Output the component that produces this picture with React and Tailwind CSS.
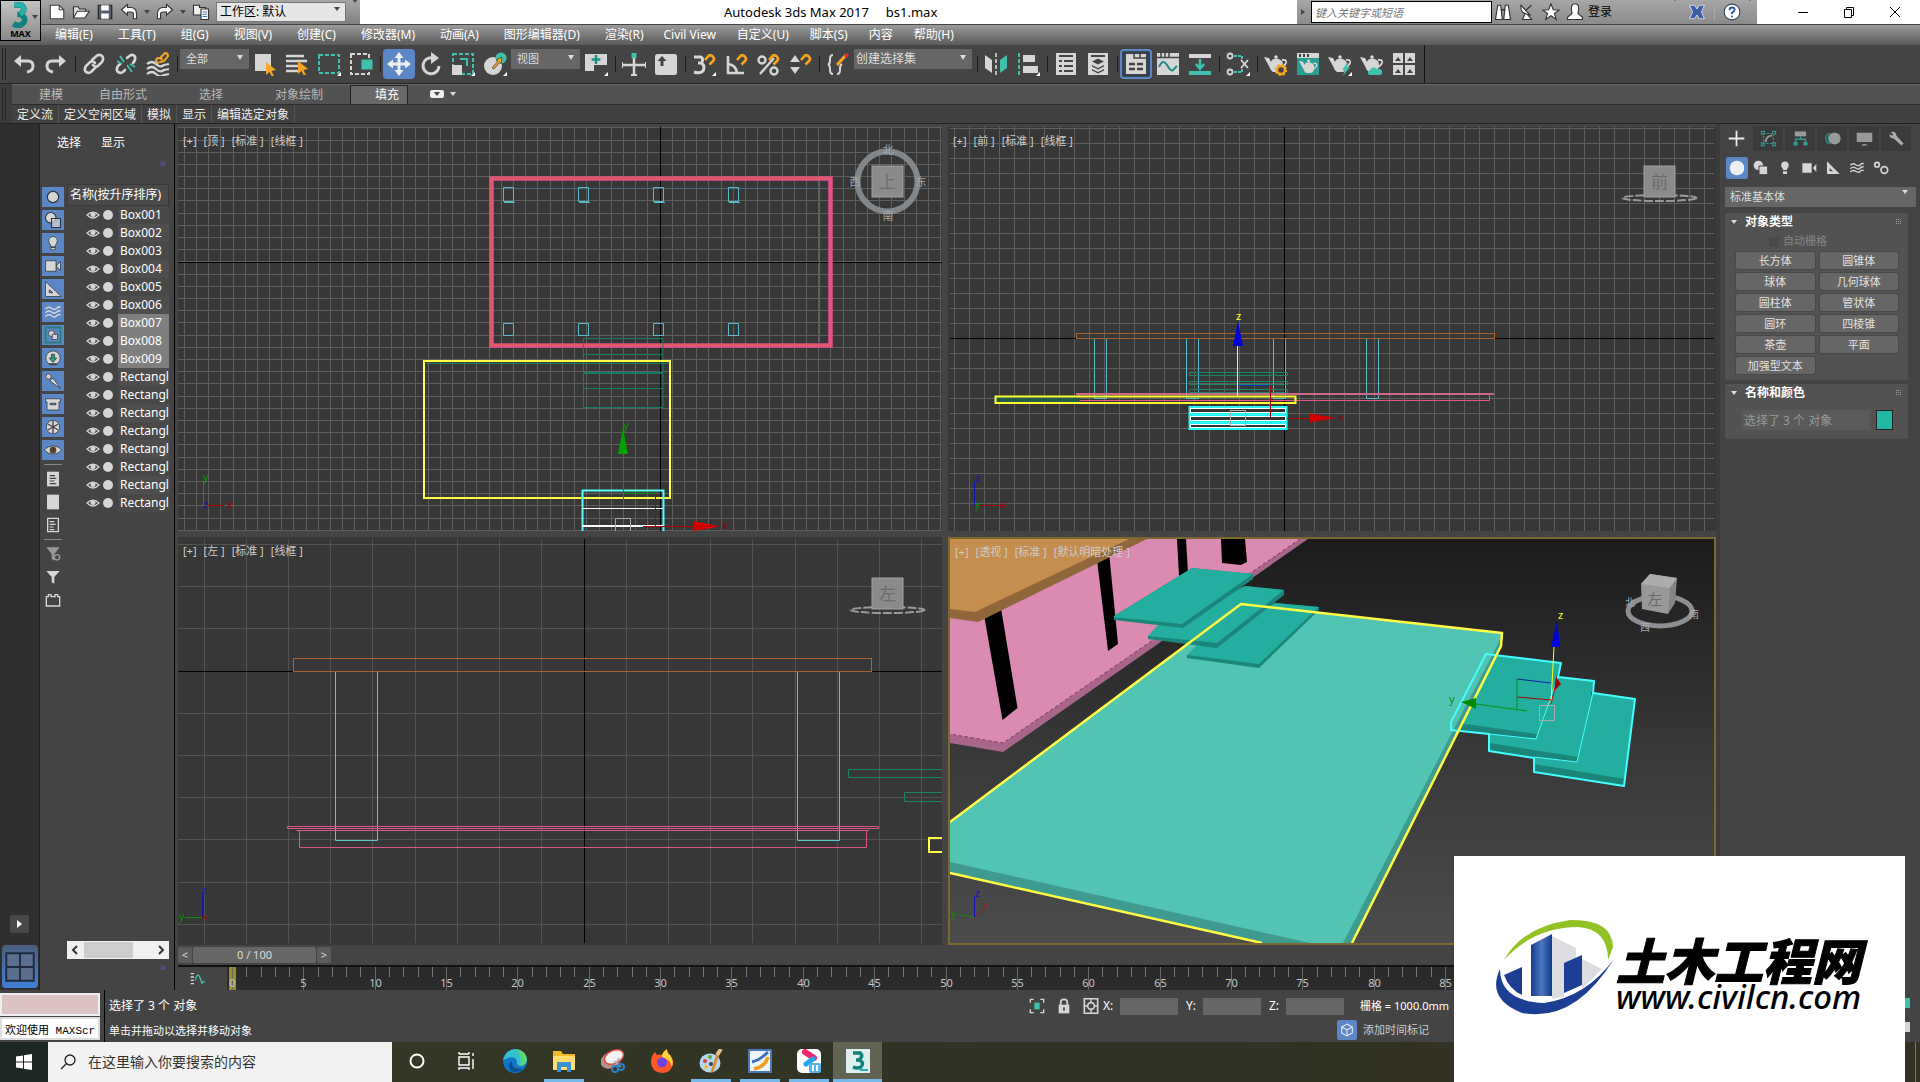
import React from 'react';

const MENUS = [
  '编辑(E)', '工具(T)', '组(G)', '视图(V)', '创建(C)', '修改器(M)', '动画(A)', '图形编辑器(D)', '渲染(R)',
];

const MORE_MENUS = ['Civil View', '自定义(U)', '脚本(S)', '内容', '帮助(H)'];

const NODES = [
  'Box001', 'Box002', 'Box003', 'Box004', 'Box005', 'Box006', 'Box007', 'Box008', 'Box009',
  'Rectangle001', 'Rectangle002', 'Rectangle003', 'Rectangle004', 'Rectangle005', 'Rectangle006',
  'Rectangle007', 'Rectangle008',
];

const SELECTED = ['Box007', 'Box008', 'Box009'];

const PRIMITIVES = [
  '长方体', '圆锥体', '球体', '几何球体', '圆柱体', '管状体', '圆环', '四棱锥', '茶壶', '平面', '加强型文本',
];

const L = '#d6d6d6';
const T = '#3fc1b0';
const Y = '#f5a623';

function Svg({ size = 'h-6 w-6', box = '0 0 24 24', children }) {
  return (
    <svg className={`block shrink-0 ${size}`} viewBox={box} fill="none" aria-hidden="true">
      {children}
    </svg>
  );
}

/* ---------- Shared glyphs ---------- */

function Magnet() {
  return <path d="M13 8 L17 3.500 A4 4 0 0 1 22 8 L17.500 12.500" stroke={Y} strokeWidth="2.600" />;
}

function Teapot({ fill = L }) {
  return (
    <g fill={fill}>
      <path d="M0 5 L5 6 L7 10 Q7 7 12 6.500 Q19 7 19 13 Q19 18 15 20 H9 Q6 18 5.500 15 Z" />
      <circle cx="12" cy="5" r="1.800" />
      <path d="M18 8 Q23 7 22 11 Q21 14 17 15" stroke={fill} strokeWidth="1.800" fill="none" />
    </g>
  );
}

function Waves() {
  return (
    <g stroke={L} strokeWidth="2">
      <path d="M2 8 Q6 4 10 7 T17 7 T22 6" />
      <path d="M2 13 Q6 9 10 12 T17 12 T22 11" />
      <path d="M2 18 Q6 14 10 17 T17 17 T22 16" />
    </g>
  );
}

function Flyout() {
  return <path d="M24 20 V24 H20 Z" fill="#fff" />;
}

/* ---------- Main toolbar ---------- */

function Tool({ label, active, outlined, flyout, children }) {
  const state = active ? 'bg-[#5b87c7]' : outlined ? 'border-2 border-[#5b87c7] bg-[#39424f]' : '';
  return (
    <button type="button" aria-label={label} className={`flex h-[30px] w-8 shrink-0 items-center justify-center rounded-sm ${state}`}>
      <Svg>
        {children}
        {flyout && <Flyout />}
      </Svg>
    </button>
  );
}

function Sep() {
  return <span className="flex w-1.5 shrink-0 justify-center"><span className="h-4 w-px bg-[#1c1c1c]" /></span>;
}

function Combo({ label, width, text = 'pl-1.5 text-[11px]', children }) {
  return (
    <span className={`relative mb-2.5 flex h-5 shrink-0 ${width}`}>
      <select aria-label={label} className={`h-5 w-full appearance-none bg-[#666] leading-5 text-[#ddd] ${text}`}>
        <option>{children}</option>
      </select>
      <span className="pointer-events-none absolute top-1.5 right-1.5 border-x-[3px] border-t-[5px] border-x-transparent border-t-[#ddd]" />
    </span>
  );
}

function Toolbar() {
  return (
    <div className="flex h-[39px] shrink-0 border-b border-[#222] bg-[#444]">
      <div className="flex items-center border-r border-[#111]">
        <span className="mr-0.5 ml-0.5 h-8 w-1 border-x border-[#222]" />
        <Tool label="撤消"><path d="M2 9 L9 3 V15 Z" fill={L} /><path d="M8 9 H16 Q21 9 21 14 Q21 19 15 20" stroke={L} strokeWidth="3" /></Tool>
        <Tool label="重做"><path d="M22 9 L15 3 V15 Z" fill={L} /><path d="M16 9 H8 Q3 9 3 14 Q3 19 9 20" stroke={L} strokeWidth="3" /></Tool>
        <Sep />
        <Tool label="链接">
          <g stroke={L} strokeWidth="2.600" strokeLinecap="round">
            <path d="M10 8 L15 3.500 Q18 2 20.500 4.500 Q22 7 20 10 L16 14 Q13 15.500 11 13" />
            <path d="M14 15 L9 20 Q6 22 3.500 19.500 Q2 17 4 14 L8 10 Q11 8.500 13 11" />
          </g>
        </Tool>
        <Tool label="取消链接">
          <g stroke={L} strokeWidth="2.600" strokeLinecap="round">
            <path d="M13 6 L16 3.500 Q19 2 21 4.500 Q22 8 19 11" />
            <path d="M11 18 L9 20 Q6 22 3.500 19.500 Q2 17 4 14 L6 12" />
          </g>
          <path d="M6 4 L10 10 M3 9 L8 12 M13 13 L18 20 M16 12 L21 15" stroke={T} strokeWidth="1.800" />
        </Tool>
        <Tool label="绑定到空间扭曲">
          <g stroke={L} strokeWidth="2.200">
            <path d="M1 12 Q6 8 10 12 T18 13 L23 12" />
            <path d="M1 17 Q6 13 10 17 T18 18 L23 17" />
            <path d="M1 22 Q6 18 10 22 T18 23 L23 22" />
          </g>
          <path d="M12 11 L10 9 Q10 6 13 6 L16 7 M15 5 L19 1 Q22 1 22 4 L18 9 L14 10" stroke={Y} strokeWidth="2" strokeLinecap="round" />
        </Tool>
        <Sep />
        <Combo label="选择过滤器" width="w-[69px]">全部</Combo>
        <Tool label="选择对象"><path d="M2 2 H18 V19 H2 Z" fill={L} /><path d="M13 10 L23 18 L18.500 19 L21 24 L18.500 24 L16.500 20 L13 23 Z" fill={Y} /></Tool>
        <Tool label="按名称选择"><path d="M1 4 H19 M1 9 H22 M1 14 H13 M1 19 H14" stroke={L} strokeWidth="2.600" /><path d="M13 9 L23 17 L18.500 18 L21 23 L18.500 23 L16.500 19 L13 22 Z" fill={Y} /></Tool>
        <Tool label="矩形选择区域" flyout><path d="M2 3 H22 V21 H2 Z" stroke={T} strokeWidth="2" strokeDasharray="4 2" /></Tool>
        <Tool label="窗口/交叉"><path d="M2 2 H20 V22 H2 Z" stroke={L} strokeWidth="2" strokeDasharray="4 2" /><path d="M12 7 H24 V18 H12 Z" fill={T} stroke="#444" /></Tool>
        <Sep />
        <Tool label="选择并移动" active>
          <path d="M12 0 L16.500 6 H13.500 V10.500 H18 V7.500 L24 12 L18 16.500 V13.500 H13.500 V18 H16.500 L12 24 L7.500 18 H10.500 V13.500 H6 V16.500 L0 12 L6 7.500 V10.500 H10.500 V6 H7.500 Z" fill="#eee" />
        </Tool>
        <Tool label="选择并旋转"><path d="M14 6 A8 8 0 1 0 20 14" stroke={L} strokeWidth="3" /><path d="M12 0 L20 6 L12 12 Z" fill={L} /></Tool>
        <Tool label="选择并缩放" flyout>
          <path d="M2 2 H22 V22 H2 Z" stroke={T} strokeWidth="2" strokeDasharray="4 2" />
          <path d="M1 13 H11 V23 H1 Z" fill={L} />
          <path d="M9 7 H16 V14" stroke={T} strokeWidth="2" />
        </Tool>
        <Tool label="选择并放置" flyout>
          <circle cx="10" cy="14" r="9" fill={L} />
          <circle cx="18" cy="6" r="5.500" fill={T} />
          <path d="M9 16 L15 9 L13 8 L19 5 L18 12 L16.500 10.500 L11 17 Z" fill={Y} stroke="#444" strokeWidth=".8" />
        </Tool>
        <Combo label="参考坐标系" width="w-[69px]">视图</Combo>
        <Tool label="使用轴点中心" flyout><path d="M1 2 H10 V19 H1 Z M10 2 H23 V13 H10 Z" fill={L} /><path d="M12 3 V12 M7.500 7.500 H16.500" stroke="#1f8f86" strokeWidth="2.500" /></Tool>
        <Sep />
        <Tool label="选择并操纵"><path d="M12 5 V23 M1 13 H23" stroke={L} strokeWidth="2.500" /><path d="M9.500 1 H14.500 V6 H9.500 Z" fill={T} /><path d="M0 10 V16 M24 10 V16 M9 23 H15" stroke={L} strokeWidth="2" /></Tool>
        <Tool label="键盘快捷键覆盖"><rect x="1" y="2" width="22" height="21" rx="2.500" fill={L} /><path d="M8 4 L12.500 9 H9.500 V14 H6.500 V9 H3.500 Z" fill="#444" /></Tool>
        <Sep />
        <Tool label="捕捉开关" flyout><path d="M2 5 H9 Q12 7 9.500 11 H6 H9.500 Q13.500 14 11 19 Q8 22 2 20" stroke={L} strokeWidth="3" /><Magnet /></Tool>
        <Tool label="角度捕捉"><path d="M4 4 V21 H20 M4 12 Q12 13 13 21" stroke={L} strokeWidth="2.600" /><Magnet /></Tool>
        <Tool label="百分比捕捉"><circle cx="6" cy="8" r="3.500" stroke={L} strokeWidth="2.400" /><circle cx="18" cy="19" r="3.500" stroke={L} strokeWidth="2.400" /><path d="M4 22 L18 6" stroke={L} strokeWidth="2.400" /><Magnet /></Tool>
        <Tool label="微调器捕捉"><path d="M2 10 L7 3 L12 10 Z M2 15 H12 L7 22 Z" fill={L} /><Magnet /></Tool>
        <Sep />
        <Tool label="编辑命名选择集"><path d="M7 3 Q4 3 4 7 V9 Q4 12 2 12 Q4 13 4 16 V18 Q4 22 7 22 M11 22 Q14 22 14 18 V16 Q14 13 16 12" stroke={L} strokeWidth="2" /><path d="M11 13 L20 3" stroke={Y} strokeWidth="3" /><path d="M19 5 L22 2" stroke="#d33" strokeWidth="3" /></Tool>
        <Combo label="命名选择集" width="w-[118px]" text="pl-0.5 text-xs">创建选择集</Combo>
        <span className="w-0.5" />
        <Sep />
        <Tool label="镜像"><path d="M1 3 L8 8 V21 L1 16 Z" fill={L} /><path d="M23 3 L16 8 V21 L23 16 Z" fill={T} /><path d="M12 1 V23" stroke={L} strokeWidth="1.600" strokeDasharray="4 2" /></Tool>
        <Tool label="对齐" flyout><path d="M3 1 V23" stroke={T} strokeWidth="2" strokeDasharray="4 2" /><path d="M7 3 H19 V10 H7 Z M7 14 H22 V21 H7 Z" fill={L} /></Tool>
        <Sep />
        <Tool label="切换场景资源管理器"><path d="M2 1 H22 V23 H2 Z" fill={L} /><path d="M5 4 H19 M5 9 H8 M10 9 H19 M5 14 H8 M10 14 H19 M5 19 H8 M10 19 H19" stroke="#444" strokeWidth="2" /></Tool>
        <Tool label="切换层资源管理器"><path d="M2 1 H22 V23 H2 Z" fill={L} /><path d="M5 4 H19" stroke="#444" strokeWidth="2" /><path d="M12 6.500 L18 9.500 L12 12.500 L6 9.500 Z M6 13 L12 16 L18 13 V14.500 L12 17.500 L6 14.500 Z M6 17 L12 20 L18 17 V18.500 L12 21.500 L6 18.500 Z" fill="#444" /></Tool>
        <Sep />
        <Tool label="显示功能区" outlined><path d="M2 2 H22 V22 H2 Z" fill={L} /><path d="M10 2 V6 H22 M16 2 V6" stroke="#444" strokeWidth="1.500" /><path d="M5 12 H11 M5 17 H11 M13 12 H19 M13 17 H19" stroke="#444" strokeWidth="2.500" /></Tool>
        <Tool label="曲线编辑器"><path d="M1 1 H23 V23 H1 Z" fill={L} /><path d="M1 5.500 H23 M5 1 V5 M9 1 V5 M13 1 V5" stroke="#444" strokeWidth="1.500" /><path d="M3 15 Q7 6 11 13 T17 18 L21 14" stroke="#1f8f86" strokeWidth="2" /></Tool>
        <Tool label="图解视图"><path d="M1 2 H23 V6 H1 Z" fill={L} /><path d="M1 19 H23 V23 H1 Z" fill={T} /><path d="M12 7 V15 M8 12 L12 17 L16 12" stroke={T} strokeWidth="2.500" /></Tool>
        <Sep />
        <Tool label="材质编辑器" flyout><g stroke={L} strokeWidth="1.800"><circle cx="4" cy="4" r="2.500" /><circle cx="4" cy="20" r="2.500" /><path d="M15 8 L22 16 M22 8 L15 16" /></g><path d="M8 4 H16 V8 M8 20 H16 V16" stroke={T} strokeWidth="2" strokeDasharray="3 1" /></Tool>
        <Sep />
        <Tool label="渲染设置"><Teapot /><circle cx="17" cy="18" r="4" stroke={Y} strokeWidth="2.500" fill="#444" /><circle cx="17" cy="18" r="5.500" stroke={Y} strokeWidth="1.500" strokeDasharray="2 2.300" /></Tool>
        <Tool label="渲染帧窗口"><path d="M1 1 H23 V6 H1 Z" fill={L} /><path d="M1 6 H23 V23 H1 Z" fill="#2a9d92" /><path d="M4 2 V5 M8 2 V5 M12 2 V5" stroke="#444" strokeWidth="2" /><g transform="translate(3 5) scale(.8)"><Teapot /></g></Tool>
        <Tool label="渲染产品" flyout><Teapot /><path d="M20 10 L14 18 H17 L15 24 L22 15 H19 Z" fill={T} /></Tool>
        <Tool label="云渲染"><Teapot /><path d="M9 23 Q6 20 10 18 Q13 13 17 17 Q23 16 22 22 L20 23 Z" fill={T} /></Tool>
        <Tool label="渲染库"><path d="M1 1 H11 V11 H1 Z M13 1 H23 V11 H13 Z M1 13 H11 V23 H1 Z M13 13 H23 V23 H13 Z" fill={L} /><path d="M3 9 L6 5 L9 9 Z M15 9 L18 5 L21 9 Z M3 21 L6 17 L9 21 Z M15 21 L18 17 L21 21 Z" fill="#444" /></Tool>
        <span className="w-1" />
      </div>
    </div>
  );
}

/* ---------- Title bar and menus ---------- */

function Caret({ dark }) {
  return <span className={`shrink-0 border-x-[3px] border-t-4 border-x-transparent ${dark ? 'border-t-[#444]' : 'border-t-[#ddd]'}`} />;
}

function TitleBar() {
  const q = 'h-[18px] w-[18px]';
  return (
    <div className="flex h-6 shrink-0 items-center bg-white">
      <div className="flex h-6 w-[360px] shrink-0 items-center gap-1.5 bg-linear-to-b from-[#a6a6a6] to-[#818181] pl-12">
        <button type="button" aria-label="新建"><Svg size={q}><path d="M3 3 H15 L21 9 V21 H3 Z" fill="#fff" stroke="#444" strokeWidth="1.500" /><path d="M15 3 V9 H21" stroke="#444" strokeWidth="1.500" /></Svg></button>
        <button type="button" aria-label="打开"><Svg size={q}><path d="M2 20 V5 H8 L10 8 H18 V11" fill="#ddd" stroke="#333" strokeWidth="1.500" /><path d="M2 20 L7 11 H23 L17 20 Z" fill="#fff" stroke="#333" strokeWidth="1.500" /></Svg></button>
        <button type="button" aria-label="保存"><Svg size={q}><path d="M3 3 H21 V21 H3 Z" fill="#56606c" stroke="#222" strokeWidth="1.500" /><path d="M7 3 H17 V10 H7 Z M7 14 H17 V21 H7 Z" fill="#fff" /></Svg></button>
        <button type="button" aria-label="撤消"><Svg size={q}><path d="M2 9 L10 2 V6 H15 Q22 7 22 14 V21 H18 V15 Q18 12 14 12 H10 V16 Z" fill="#fff" stroke="#333" strokeWidth="1.400" /></Svg></button>
        <Caret dark />
        <button type="button" aria-label="重做"><Svg size={q}><path d="M22 9 L14 2 V6 H9 Q2 7 2 14 V21 H6 V15 Q6 12 10 12 H14 V16 Z" fill="#fff" stroke="#333" strokeWidth="1.400" /></Svg></button>
        <Caret dark />
        <button type="button" aria-label="项目文件夹"><Svg size={q}><path d="M2 3 H10 V6 H18 V16 H2 Z" fill="#eee" stroke="#333" strokeWidth="1.500" /><path d="M12 8 H22 V22 H12 Z" fill="#fff" stroke="#333" strokeWidth="1.500" /><path d="M14 12 H20 M14 15 H20 M14 18 H20" stroke="#47a" strokeWidth="1.500" /></Svg></button>
        <span className="relative flex">
          <select aria-label="工作区" className="h-5 w-[130px] appearance-none border border-[#777] bg-[#e6e6e6] pl-[3px] text-xs leading-4 text-black">
            <option>工作区: 默认</option>
          </select>
          <span className="pointer-events-none absolute top-2 right-1.5"><Caret dark /></span>
        </span>
        <span className="border-t border-[#333] pt-0.5"><Caret dark /></span>
      </div>
      <h1 className="flex-1 pl-[364px] text-[13px] leading-6 whitespace-pre text-black">Autodesk 3ds Max 2017{'     '}bs1.max</h1>
      <div className="flex h-6 w-[460px] items-center bg-linear-to-b from-[#a6a6a6] to-[#8b8b8b] pl-1">
        <span className="border-y-[3px] border-l-4 border-y-transparent border-l-[#444]" />
        <input aria-label="搜索帮助" placeholder="键入关键字或短语" className="ml-1.5 h-[22px] w-[181px] border border-black bg-white pl-[3px] text-[11px] italic placeholder:text-[#777]" />
        <button type="button" aria-label="搜索" className="ml-0.5"><Svg size={q}><path d="M5 3 H9 L11 22 H2 Z M15 3 H19 L22 22 H13 Z" fill="#fff" stroke="#333" strokeWidth="1.500" /><path d="M9 9 H15" stroke="#333" strokeWidth="2" /></Svg></button>
        <button type="button" aria-label="通信中心" className="ml-1.5"><Svg size={q}><path d="M4 3 Q2 14 16 16 Z" fill="#fff" stroke="#333" strokeWidth="1.500" /><path d="M10 10 L18 3 M9 15 L6 22 H18 L13 16" fill="#fff" stroke="#333" strokeWidth="1.500" /></Svg></button>
        <button type="button" aria-label="收藏夹" className="ml-1.5"><Svg size={q}><path d="M12 1 L15 9 L23 9.500 L16.500 14 L19 22 L12 17 L5 22 L7.500 14 L1 9.500 L9 9 Z" fill="#fff" stroke="#333" strokeWidth="1.400" /></Svg></button>
        <button type="button" className="ml-1.5 flex items-center gap-1 text-xs text-black">
          <Svg size={q}><path d="M8 14 Q5 1 12 1 Q19 1 16 14 L22 19 V22 H2 V19 Z" fill="#fff" stroke="#333" strokeWidth="1.500" /></Svg>
          登录
        </button>
        <span className="ml-[60px]"><Caret dark /></span>
        <button type="button" aria-label="Exchange" className="ml-2.5"><Svg size={q}><path d="M2 3 H9 L12 8 L15 3 H22 L18 12 L22 21 H15 L12 16 L9 21 H2 L6 12 Z" fill="#3c5fa8" stroke="#dde" strokeWidth="1.200" /></Svg></button>
        <span className="mx-2 h-4 w-px bg-[#aaa]" />
        <button type="button" aria-label="帮助"><Svg size={q}><circle cx="12" cy="12" r="10.500" fill="#fff" stroke="#3a4a66" strokeWidth="1.500" /><path d="M8.500 9.500 Q9 6 12 6 Q15.500 6 15.500 9 Q15.500 11 12 13 V15 M12 17 V19" stroke="#2d57a5" strokeWidth="2.500" /></Svg></button>
        <span className="ml-1.5"><Caret dark /></span>
      </div>
      <div className="flex w-[163px] shrink-0 justify-between pr-[19px] pl-10">
        <button type="button" aria-label="最小化"><Svg size="h-3 w-3" box="0 0 12 12"><path d="M1 6.500 H11" stroke="#000" /></Svg></button>
        <button type="button" aria-label="还原"><Svg size="h-3 w-3" box="0 0 12 12"><path d="M1.500 3.500 H8.500 V11.500 H1.500 Z M3.500 3.500 V1.500 H10.500 V9.500 H8.500" stroke="#000" /></Svg></button>
        <button type="button" aria-label="关闭"><Svg size="h-3 w-3" box="0 0 12 12"><path d="M1 1 L11 11 M11 1 L1 11" stroke="#000" /></Svg></button>
      </div>
    </div>
  );
}

function Header() {
  return (
    <header className="relative shrink-0">
      <TitleBar />
      <nav className="flex h-[21px] items-center gap-5 border-t border-[#444] bg-linear-to-b from-[#9b9b9b] to-[#5a5a5a] pl-[55px] text-xs leading-4 whitespace-nowrap text-white">
        <div className="flex gap-[25px]">
          {MENUS.map((m) => <button type="button" key={m}>{m}</button>)}
        </div>
        <div className="flex gap-[21px]">
          {MORE_MENUS.map((m) => <button type="button" key={m}>{m}</button>)}
        </div>
      </nav>
      <button type="button" aria-label="应用程序" className="absolute top-0 left-0 flex h-[41px] w-[41px] flex-col items-center border border-black bg-linear-to-b from-[#c4c4c4] to-[#8a8a8a]">
        <Svg size="h-[28px] w-[28px]" box="0 0 27 27">
          <path d="M7 4 H14 Q19 8 13 13 H10 H13 Q20 17 15 22 Q11 25 6 22" stroke="#12807e" strokeWidth="5.500" />
          <path d="M7 4 H14 Q19 8 13 13" stroke="#25b3ad" strokeWidth="4.500" />
        </Svg>
        <span className="text-[9px] leading-[10px] font-bold text-black">MAX</span>
        <span className="absolute top-[17px] right-0.5"><Caret dark /></span>
      </button>
    </header>
  );
}

/* ---------- Ribbon ---------- */

function Ribbon() {
  return (
    <div className="flex shrink-0 border-b border-[#222] bg-[#3c3c3c]">
      <span className="mt-1 mr-1.5 ml-0.5 h-8 w-1 border-x border-[#222]" />
      <div className="flex-1">
        <div className="flex h-[21px] items-end border-t border-b border-t-[#6a6a6a] border-b-[#2c2c2c] bg-[#525252] text-xs leading-[18px] text-[#b8b8b8]">
          <button type="button" className="ml-[27px]">建模</button>
          <button type="button" className="ml-9">自由形式</button>
          <button type="button" className="ml-[52px]">选择</button>
          <button type="button" className="ml-[52px]">对象绘制</button>
          <button type="button" className="ml-[27px] border-t border-r border-l border-[#222] bg-[#696969] pr-2 pl-6 text-white">填充</button>
          <button type="button" aria-label="功能区选项" className="mb-1.5 ml-[22px] flex items-center gap-1.5">
            <span className="flex h-2 w-3.5 items-center justify-center rounded-xs bg-[#eee]"><Caret dark /></span>
            <Caret />
          </button>
        </div>
        <div className="flex h-[18px] bg-[#414141] text-xs leading-[17px] text-[#eee]">
          {['定义流', '定义空闲区域', '模拟', '显示', '编辑选定对象'].map((t) => (
            <button type="button" key={t} className="border-r border-[#555] px-[5px]">{t}</button>
          ))}
        </div>
      </div>
    </div>
  );
}

/* ---------- Scene explorer ---------- */

const FILTERS = [
  ['几何体', <circle cx="12" cy="12" r="7.500" fill={L} stroke="#333" strokeWidth="1.500" />],
  ['图形', <g stroke="#333" strokeWidth="1.500"><circle cx="9" cy="9" r="7" fill={L} /><path d="M10 10 H22 V22 H10 Z" fill={L} fillOpacity=".7" /></g>],
  ['灯光', <path d="M9 17 Q9 14 7 12 Q4 5 12 3 Q20 5 17 12 Q15 14 15 17 Z M9 18 H15 V21 H9 Z" fill={L} stroke="#333" />],
  ['摄影机', <path d="M2 5 H16 V19 H2 Z M17 11 L22 6 V18 L17 13 Z" fill={L} stroke="#333" />],
  ['辅助对象', <path d="M2 2 V22 H23 Z M7 13 V17 H12 Z" fill={L} fillRule="evenodd" stroke="#333" />],
  ['空间扭曲', <Waves />],
  ['组', <g><path d="M2 2 H22 V22 H2 Z" stroke="#2a7d76" strokeWidth="2.500" /><circle cx="10" cy="10" r="4" fill={L} stroke="#333" /><path d="M11 11 H18 V18 H11 Z" fill={L} stroke="#333" /></g>],
  ['外部参照', <g><circle cx="12" cy="12" r="9.500" fill={L} stroke="#333" /><path d="M10 7 H14 V12 H17 L12 18 L7 12 H10 Z" fill="#2a9d80" stroke="#333" /><path d="M7 20 H17" stroke="#333" strokeWidth="2" /></g>],
  ['骨骼', <g><circle cx="6" cy="6" r="3.500" fill={L} stroke="#333" /><path d="M8 12 L12 8 L22 22 Z" fill={L} stroke="#333" /></g>],
  ['容器', <path d="M2 5 H22 V9 H20 V20 H4 V9 H2 Z M8 11 H16 V13 H8 Z" fill={L} fillRule="evenodd" stroke="#333" />],
  ['冻结', <g><circle cx="12" cy="12" r="9" fill={L} stroke="#333" /><path d="M12 4 V20 M5 8 L19 16 M19 8 L5 16" stroke="#444" strokeWidth="1.800" /></g>],
  ['隐藏', <g><path d="M0 12 Q12 1 24 12 Q12 23 0 12 Z" fill={L} stroke="#333" /><circle cx="12" cy="12" r="4.500" fill="#543" /></g>],
];

function FilterButton({ label, children }) {
  return (
    <button type="button" aria-label={label} className="flex h-5 w-[22px] items-center justify-center bg-[#5b87c7]">
      <Svg size="h-[18px] w-[18px]">{children}</Svg>
    </button>
  );
}

function ListButton({ label, children }) {
  return (
    <button type="button" aria-label={label} className="flex h-5 w-[22px] items-center justify-center">
      <Svg size="h-4 w-4">{children}</Svg>
    </button>
  );
}

function SceneExplorer() {
  return (
    <aside className="flex w-[135px] shrink-0 flex-col border-r border-black bg-[#444] text-xs text-white">
      <div className="mt-[9px] flex h-5 items-center gap-5 pl-[17px] leading-5">
        <button type="button">选择</button>
        <button type="button">显示</button>
      </div>
      <span className="mt-0.5 h-4 pr-2 text-right leading-4 text-[#5a55b5]">»</span>
      <div className="mt-[13px] flex min-h-0 flex-1 gap-[3px] pl-0.5">
        <div className="flex flex-col gap-[3px] pt-[3px]">
          {FILTERS.map(([label, icon]) => <FilterButton key={label} label={label}>{icon}</FilterButton>)}
          <span className="mx-0.5 my-px h-px bg-[#888]" />
          <ListButton label="全部选择"><path d="M3 1 H21 V23 H3 Z" fill={L} /><path d="M7 7 H15 M7 11 H17 M7 15 H14 M7 19 H17" stroke="#444" strokeWidth="1.800" /></ListButton>
          <ListButton label="全部不选"><path d="M3 1 H21 V23 H3 Z" fill={L} /></ListButton>
          <ListButton label="反选"><path d="M4 2 H20 V22 H4 Z" stroke={L} strokeWidth="2" /><path d="M7 7 H14 M7 11 H16 M7 15 H13 M7 19 H14" stroke={L} strokeWidth="1.800" /></ListButton>
          <span className="mx-0.5 my-px h-px bg-[#888]" />
          <ListButton label="过滤器配置"><path d="M2 2 H22 L14 12 V22 L10 19 V12 Z" fill="#999" /><circle cx="18" cy="17" r="4" stroke="#999" strokeWidth="2" fill="#444" /></ListButton>
          <ListButton label="过滤器"><path d="M2 3 H22 L14 12 V22 L10 20 V12 Z" fill={L} /></ListButton>
          <ListButton label="锁定"><path d="M2 7 H5 V4 H9 V7 H15 V4 H19 V7 H22 V21 H2 Z" stroke={L} strokeWidth="2" /></ListButton>
        </div>
        <div className="flex w-[102px] flex-col overflow-hidden">
          <table className="w-full table-fixed border-collapse">
            <thead>
              <tr className="h-[21px] border border-[#393939] bg-[#4a4a4a]">
                <th colSpan={2} className="pl-0.5 text-left font-normal whitespace-nowrap">名称(按升序排序)</th>
              </tr>
            </thead>
            <tbody>
              {NODES.map((name, i) => (
                <tr key={name} className="h-[18px] leading-[18px]">
                  <td className="w-[51px] p-0 pl-[18px]">
                    <span className="flex items-center gap-[3px]">
                      <Svg size="h-3 w-[14px]" box="0 0 28 24"><path d="M2 12 Q14 0 26 12 Q14 24 2 12 Z" stroke={L} strokeWidth="2.500" /><circle cx="14" cy="11" r="5" fill={L} /></Svg>
                      <span className="h-2.5 w-2.5 rounded-full bg-[#d6d6d6]" />
                    </span>
                  </td>
                  <td className={`overflow-hidden p-0 pl-0.5 whitespace-nowrap ${SELECTED.includes(name) ? 'bg-[#7f7f7f]' : i % 2 ? 'bg-[#4e4e4e]' : 'bg-[#494949]'}`}>{name}</td>
                </tr>
              ))}
            </tbody>
          </table>
          <div className="mt-auto flex h-[18px] items-center justify-between bg-[#f0f0f0] px-1">
            <button type="button" aria-label="向左滚动"><Svg size="h-3 w-2" box="0 0 8 12"><path d="M6 2 L2 6 L6 10" stroke="#333" strokeWidth="2" /></Svg></button>
            <span className="mr-5 h-4 w-[49px] bg-[#cdcdcd]" />
            <button type="button" aria-label="向右滚动"><Svg size="h-3 w-2" box="0 0 8 12"><path d="M2 2 L6 6 L2 10" stroke="#333" strokeWidth="2" /></Svg></button>
          </div>
        </div>
      </div>
      <span className="h-[31px] pr-2 text-right leading-4 text-[#5a55b5]">»</span>
    </aside>
  );
}

/* ---------- Viewports ---------- */

// Grid lines spread from the world origin (cx, cy) to the edges of the view.
function Grid({ x, y, cx, cy, step, color = '#5e5e5e' }) {
  const w = 764;
  const h = 404;
  let d = '';
  for (let gx = cx - Math.floor((cx - x) / step) * step; gx < x + w; gx += step) d += `M${Math.floor(gx) + 0.5} ${y}v${h}`;
  for (let gy = cy - Math.floor((cy - y) / step) * step; gy < y + h; gy += step) d += `M${x} ${Math.floor(gy) + 0.5}h${w}`;
  return (
    <g>
      <path d={d} stroke={color} />
      <path d={`M${Math.floor(cx) + 0.5} ${y}v${h}M${x} ${Math.floor(cy) + 0.5}h${w}`} stroke="#000" />
    </g>
  );
}

function View({ name, box, shade, active, children }) {
  return (
    <section className={`relative min-h-0 min-w-0 overflow-hidden ${active ? 'border-2 border-[#7a6a30]' : ''}`} aria-label={name}>
      <svg className="block h-full w-full bg-[#373737]" viewBox={box} preserveAspectRatio="xMidYMid slice" fill="none">
        {children}
      </svg>
      <div className={`absolute left-[5px] flex gap-[7px] text-[11px] leading-4 text-[#ccc] ${active ? 'top-[5px]' : 'top-[6px]'}`}>
        <button type="button">[+]</button>
        <button type="button">[{name} ]</button>
        <button type="button">[标准 ]</button>
        <button type="button">[{shade} ]</button>
      </div>
    </section>
  );
}

function FlatCube({ x, y, label }) {
  return (
    <g>
      <ellipse cx={x + 15.5} cy={y + 32} rx="37" ry="3" stroke="#9a9a9a" strokeWidth="2" strokeDasharray="9 2" />
      <rect x={x} y={y} width="31" height="31" fill="#8b8b8b" stroke="#a2a2a2" />
      <text x={x + 15.5} y={y + 22} textAnchor="middle" fontSize="17" fill="#6c6c6c">{label}</text>
    </g>
  );
}

function TopView() {
  return (
    <View name="顶" shade="线框" box="178 127 764 404">
      <Grid x={178} y={127} cx={660} cy={262} step={12.2} />
      <path d="M494 188.500 H828 M819.500 180 V342" stroke="#4d6a74" />
      {[503, 578, 653, 728].map((x) => (
        <g key={x} stroke="#55bccb">
          <path d={`M${x + 0.5} 187.500 h10 v14 h-10 z M${x + 1} 202.500 h11`} />
          <path d={`M${x + 0.5} 323.500 h10 v12 h-10 z`} />
        </g>
      ))}
      <rect x="491.500" y="178.500" width="339" height="167" stroke="#e8508c" strokeWidth="4.500" />
      <path d="M490 178 H830 M491 178 V345 M490 345 H830" stroke="#d95f52" strokeWidth="1.500" />
      <path d="M583.500 338.500 H663 V407.500 H583.500 Z M583 354.500 H663 M583 388.500 H663" stroke="#107e66" />
      <path d="M583 373 H663" stroke="#107e66" strokeWidth="2" />
      <path d="M426 363.500 H669" stroke="#1f7d5c" />
      <rect x="424" y="361" width="246" height="137" stroke="#ffff45" strokeWidth="2" />
      <path d="M582.500 531 V490.500 H663.500 V531" stroke="#5ff" strokeWidth="2" />
      <path d="M582 508.500 H663" stroke="#fff" />
      <path d="M582 526 H663" stroke="#fff" strokeWidth="2" />
      <path d="M615.500 531 V518.500 H630.500 V531" stroke="#aaa" />
      <path d="M623.500 505 V453 M623 493.500 H655" stroke="#0a8f0a" />
      <path d="M623 428 L628 454 H618 Z" fill="#00a000" />
      <text x="623" y="429" fontSize="11" fill="#0a8f0a">y</text>
      <path d="M655.500 494 V526 M643 526.500 H694" stroke="#a00" />
      <path d="M720 526.500 L694 531 V521 Z" fill="#d00000" />
      <text x="722" y="529" fontSize="10" fill="#900">x</text>
      <path d="M203.500 505 V481" stroke="#0a9a0a" />
      <text x="203" y="481" fontSize="10" fill="#0a9a0a">y</text>
      <path d="M207 505.500 H224" stroke="#a00" />
      <text x="227" y="508" fontSize="11" fill="#a00">x</text>
      <text x="203" y="508" fontSize="10" fill="#1414aa">z</text>
      <circle cx="887.500" cy="181.500" r="30" stroke="#8a8f94" strokeWidth="6" strokeOpacity=".9" />
      <rect x="872" y="166" width="31" height="31" fill="#8b8b8b" stroke="#a2a2a2" />
      <text x="887.500" y="188" fontSize="17" textAnchor="middle" fill="#6c6c6c">上</text>
      <g fontSize="11" textAnchor="middle" fill="#a4a8ac">
        <text x="888" y="154">北</text><text x="855" y="186">西</text><text x="921" y="186">东</text><text x="888" y="220">南</text>
      </g>
    </View>
  );
}

function FrontView() {
  return (
    <View name="前" shade="线框" box="948 127 768 404">
      <Grid x={950} y={127} cx={1284} cy={338} step={15} />
      {[1094, 1186, 1273, 1366].map((x) => <path key={x} d={`M${x + 0.5} 339 V398.500 h12 V339`} stroke="#55bccb" />)}
      <path d="M1189.500 372.500 h98 v3 h-98 z M1189.500 381.500 h98 v3 h-98 z M1189.500 389.500 h98 v3 h-98 z" stroke="#188468" />
      <rect x="1076.500" y="333.500" width="418" height="5" stroke="#a9622c" />
      <path d="M1076 394 H1494" stroke="#cf6589" strokeWidth="2" />
      <path d="M1079.500 395 V400.500 H1489.500 V395" stroke="#e0568a" />
      <rect x="996" y="397" width="84" height="6" fill="#1f5a4e" />
      <rect x="995.500" y="396.500" width="300" height="6.500" stroke="#ffff30" strokeWidth="2" />
      <rect x="1188.500" y="406" width="99" height="24" fill="#26f6f6" />
      <path d="M1190.500 408.500 h95 v4 h-95 z M1190.500 416.500 h95 v4 h-95 z M1190.500 424.500 h95 v3 h-95 z" fill="#333" stroke="#fff" />
      <path d="M1238 385.500 H1270" stroke="#1030c0" />
      <path d="M1270.500 386 V418 M1287 418.500 H1310" stroke="#a00" />
      <path d="M1336 418 L1310 422.500 V413.500 Z" fill="#d00000" />
      <text x="1339" y="421" fontSize="9" fill="#800">x</text>
      <rect x="1230.500" y="410.500" width="15" height="15" stroke="#aaa" />
      <path d="M1237.500 397 V346" stroke="#ffff30" />
      <path d="M1238 321 L1243 346 H1233 Z" fill="#0000d8" />
      <text x="1236" y="320" fontSize="11" fill="#ffff30">z</text>
      <path d="M974.500 505 V482" stroke="#1414b4" />
      <text x="975" y="482" fontSize="10" fill="#1414b4">z</text>
      <path d="M980 505.500 H1004" stroke="#a00" />
      <text x="1001" y="508" fontSize="9" fill="#a00">x</text>
      <text x="975" y="508" fontSize="10" fill="#0a8f0a">y</text>
      <FlatCube x={1644} y={166} label="前" />
    </View>
  );
}

function LeftView() {
  return (
    <View name="左" shade="线框" box="178 537 764 408">
      <Grid x={178} y={539} cx={584} cy={671} step={42.2} color="#525252" />
      <path d="M335.500 672 V840.500 H377.500 V672 M797.500 672 V840.500 H839.500 V672" stroke="#5fc4cc" />
      <rect x="293.500" y="658.500" width="578" height="13" stroke="#b0602c" />
      <path d="M287.500 826.500 H878.500 V828.500 H287.500 Z M296.500 830.500 H869.500 M299.500 831 V847.500 H866.500 V831" stroke="#d8588a" />
      <path d="M942 769.500 H848.500 V777.500 H942 M942 792.500 H904.500 V801.500 H942" stroke="#188468" />
      <path d="M942 838 H929 V852 H942" stroke="#ffff45" strokeWidth="2" />
      <path d="M203 917 V894" stroke="#1414b4" strokeWidth="2" />
      <text x="202" y="894" fontSize="10" fill="#1414c4">z</text>
      <path d="M185 917.500 H202" stroke="#0a8f0a" />
      <text x="179" y="920" fontSize="10" fill="#0a8f0a">y</text>
      <text x="202" y="920" fontSize="9" fill="#a00">x</text>
      <FlatCube x={872} y={578} label="左" />
    </View>
  );
}

function PerspectiveView() {
  return (
    <View name="透视" shade="默认明暗处理" box="950 539 764 404" active>
      <defs>
        <linearGradient id="backdrop" x1="0" y1="0" x2="0" y2="1">
          <stop offset="0" stopColor="#1b1b1b" />
          <stop offset="0.5" stopColor="#373737" />
          <stop offset="1" stopColor="#4c4c4c" />
        </linearGradient>
      </defs>
      <rect x="950" y="539" width="764" height="404" fill="url(#backdrop)" />

      {/* Pavilion floor, columns and roof */}
      <path d="M950 539 H1308 L1003 752 L950 743 Z" fill="#a8668a" />
      <path d="M950 539 H1300 L1003 743 L950 734 Z" fill="#db8ab2" />
      <path d="M1300 539 L1003 743 L950 734" stroke="#513" strokeOpacity=".6" strokeDasharray="3 3" />
      <g fill="#000">
        <path d="M984 615 L1001 608 L1017.500 708 L1002.500 720 Z" />
        <path d="M1097 560 L1109 552 L1118 644 L1108 651 Z" />
        <path d="M1177 539 H1186 L1188 573 L1179 576 Z" />
        <path d="M1221 539 H1245 L1247 562 L1241 565 L1222 563 Z" />
      </g>
      <path d="M950 539 H1147 L978 622 L950 618 Z" fill="#8f673a" />
      <path d="M950 539 H1129 L975 612 L950 609 Z" fill="#c48e4e" />

      {/* Selected steps */}
      <path d="M1593 693 L1635 699 L1624 786 L1534 772 V758 Z" fill="#24ae9f" />
      <path d="M1534 764 L1625 779 L1624 786 L1534 772 Z" fill="#1c857a" />
      <path d="M1558 677 L1594 681 L1577 762 L1489 751 V734 Z" fill="#24ae9f" />
      <path d="M1489 743 L1578 757 L1577 762 L1489 751 Z" fill="#1c857a" />
      <path d="M1486 654 L1561 663 L1536 739 L1451 730 V722 Z" fill="#24ae9f" />
      <path d="M1451 722 L1537 734 L1536 739 L1451 730 Z" fill="#1c857a" />

      {/* Platform */}
      <path d="M950 822 L1241 604 L1502 633 L1501 646 L1352 943 H1262 L950 873 Z" fill="#3f9a8f" />
      <path d="M950 822 L1241 604 L1502 633 L1499 642 L1343 943 H1310 L950 862 Z" fill="#52c4b4" />

      {/* Rear steps */}
      <path d="M1275 603 L1319 607 V610 L1259 668 L1187 658 V655 Z" fill="#1c857a" />
      <path d="M1275 603 L1319 607 L1259 664 L1187 655 L1196 646 Z" fill="#24ae9f" />
      <path d="M1245 586 L1284 590 V595 L1217 648 L1148 639 V636 Z" fill="#1c857a" />
      <path d="M1245 586 L1284 590 L1217 643 L1148 636 L1157 626 Z" fill="#24ae9f" />
      <path d="M1192 568 L1253 574 V579 L1183 628 L1114 620 V616 Z" fill="#1c857a" />
      <path d="M1192 568 L1253 574 L1182 624 L1113 617 Z" fill="#24ae9f" />

      <g strokeLinejoin="round">
        <path d="M1486 654 L1561 663 L1558 677 L1594 681 L1593 693 L1635 699 L1624 786 L1534 772 V758 L1489 751 V734 L1451 730 V722 Z" stroke="#4ff" strokeWidth="2" />
        <path d="M1558 677 L1536 739 L1489 734 M1593 693 L1577 762 L1534 757" stroke="#4ff" />
        <path d="M950 822 L1241 604 L1502 633 L1501 646 L1352 943 M950 873 L1262 943" stroke="#ffff45" strokeWidth="2.500" />
      </g>

      {/* Move gizmo */}
      <path d="M1554 647 L1551 703" stroke="#ffff30" />
      <path d="M1557 621 L1560 647 H1551 Z" fill="#0000e0" />
      <text x="1558" y="619" fontSize="11" fill="#ffff30">z</text>
      <path d="M1517 679 L1551 683" stroke="#1020a0" />
      <path d="M1517 697 L1551 700" stroke="#a00" />
      <path d="M1517 679 V709 M1476 704 L1527 711" stroke="#0a8f0a" />
      <path d="M1461 702 L1476 698 V709 Z" fill="#008a00" />
      <text x="1449" y="703" fontSize="11" fill="#0a8f0a">y</text>
      <path d="M1556 677 L1561 684 L1554 691 Z" fill="#a00000" />
      <path d="M1555 688 L1551 704" stroke="#d00" />
      <rect x="1539.500" y="705.500" width="15" height="15" stroke="#aaa" />

      <path d="M974.500 917 V896" stroke="#1414b4" />
      <text x="975" y="897" fontSize="10" fill="#1414c4">z</text>
      <path d="M958 914.500 L974 917" stroke="#0a8f0a" />
      <text x="951" y="917" fontSize="10" fill="#0a8f0a">y</text>
      <path d="M975 917 L984 907" stroke="#822" />
      <text x="983" y="909" fontSize="10" fill="#922">x</text>

      <ellipse cx="1660" cy="611" rx="32" ry="15" stroke="#8d8f92" strokeWidth="5" />
      <path d="M1650 574 L1677 578 L1668 614 L1642 609 L1641 584 Z" fill="#989898" />
      <path d="M1650 574 L1677 578 L1670 588 L1641 584 Z" fill="#adadad" />
      <path d="M1677 578 L1675 603 L1668 614 L1670 588 Z" fill="#858585" />
      <text x="1655" y="605" textAnchor="middle" fontSize="15" fill="#6a6a6a">左</text>
      <g fontSize="10" fill="#a8abae"><text x="1625" y="606">北</text><text x="1640" y="631">西</text><text x="1689" y="618">南</text></g>
    </View>
  );
}

/* ---------- Time slider ---------- */

const FRAMES = Array.from({ length: 101 }, (_, i) => i);
const LABELS = [0, 5, 10, 15, 20, 25, 30, 35, 40, 45, 50, 55, 60, 65, 70, 75, 80, 85];

function TrackBar() {
  const at = (f) => Math.round(5 + f * 14.27) + 0.5;
  return (
    <div className="flex h-[25px] shrink-0 border-t-2 border-[#111]">
      <div className="flex w-[49px] items-center pl-3">
        <Svg size="h-4 w-4"><path d="M1 4 H6 M1 9 H6 M1 14 H6 M1 19 H6" stroke={L} strokeWidth="2" /><path d="M8 14 Q11 2 14 8 T18 18 L22 15" stroke={T} strokeWidth="2" /></Svg>
      </div>
      <svg className="block h-[23px] min-w-0 flex-1 bg-[#2b2b2b]" viewBox="0 0 1489 23" preserveAspectRatio="xMinYMin slice">
        <rect x="2" y="0" width="7" height="23" fill="#9a8f22" />
        {FRAMES.map((f) => <path key={f} d={`M${at(f)} 0 V${f % 5 ? 10 : 23}`} stroke={f % 5 ? '#777' : '#6a6a6a'} />)}
        {LABELS.map((f) => (
          <text key={f} x={at(f)} y="20" textAnchor="middle" fontSize="11" fill="#c4c4c4">{f}</text>
        ))}
      </svg>
    </div>
  );
}

function Workspace() {
  const step = 'h-4 w-3.5 rounded-xs bg-[#5c5c5c] leading-4';
  return (
    <main className="flex min-w-0 flex-1 flex-col bg-[#444] pt-[3px] pl-[3px]">
      <div className="grid min-h-0 flex-1 grid-cols-[minmax(0,764fr)_minmax(0,768fr)] grid-rows-[minmax(0,404fr)_minmax(0,408fr)] gap-1.5">
        <TopView />
        <FrontView />
        <LeftView />
        <PerspectiveView />
      </div>
      <div className="flex h-5 shrink-0 items-center gap-px text-[11px] text-[#ddd]">
        <button type="button" aria-label="上一帧" className={step}>&lt;</button>
        <button type="button" className="h-4 w-[123px] rounded-xs bg-[#666] leading-4">0 / 100</button>
        <button type="button" aria-label="下一帧" className={step}>&gt;</button>
      </div>
      <TrackBar />
    </main>
  );
}

/* ---------- Command panel ---------- */

const PANEL_TABS = [
  ['创建', <path d="M12 1 V23 M1 12 H23" stroke="#eee" strokeWidth="2.500" />],
  ['修改', <g stroke="#2f9a8f" strokeWidth="1.600"><path d="M5 5 H19 V19 H5 Z" strokeDasharray="3 2" /><path d="M2 2 H6 V6 H2 Z M18 2 H22 V6 H18 Z M2 18 H6 V22 H2 Z M18 18 H22 V22 H18 Z" /><path d="M8 17 Q9 8 17 8" stroke="#999" strokeWidth="2.500" /></g>],
  ['层次', <g><path d="M4 2 H20 V9 H4 Z" fill="#999" /><path d="M12 9 V13 M5 18 V13 H19 V18" stroke="#2f9a8f" strokeWidth="2" /><path d="M2 17 H8 V22 H2 Z M16 17 H22 V22 H16 Z" fill="#2f9a8f" /></g>],
  ['运动', <g><path d="M6 4 Q-1 12 6 20 M9 4 Q3 12 9 20" stroke="#2f8a82" strokeWidth="1.800" /><circle cx="15" cy="12" r="8.500" fill="#999" /></g>],
  ['显示', <path d="M1 4 H23 V17 H1 Z M7 22 Q12 17 17 22 Z" fill="#999" />],
  ['实用程序', <path d="M4 3 Q11 1 12 8 L22 19 L19 22 L8 12 Q2 12 2 6 L6 8 L7 6 Z" fill="#aaa" />],
];

const CATEGORIES = [
  ['几何体', <circle cx="12" cy="12" r="11" fill="#eee" />],
  ['图形', <g><circle cx="8" cy="8" r="7" fill={L} /><path d="M9 9 H22 V22 H9 Z" fill={L} stroke="#444" strokeWidth="1.500" /></g>],
  ['灯光', <path d="M9 15 Q9 13 7 11 Q4 4 12 2 Q20 4 17 11 Q15 13 15 15 Z M9 17 H15 V21 H9 Z" fill={L} />],
  ['摄影机', <path d="M2 5 H16 V19 H2 Z M18 12 L23 6 V18 Z" fill={L} />],
  ['辅助对象', <path d="M3 2 V21 H22 Z M7 12 V17 H12 Z" fill={L} fillRule="evenodd" />],
  ['空间扭曲', <Waves />],
  ['系统', <g stroke={L} strokeWidth="2.500"><circle cx="6" cy="7" r="3.500" /><circle cx="17" cy="15" r="5" /></g>],
];

function RolloutTitle({ children }) {
  return (
    <h2 className="flex h-[18px] items-center gap-2 px-1.5 text-xs font-bold text-white">
      <Caret />
      <span className="flex-1">{children}</span>
      <Svg size="h-1.5 w-1.5" box="0 0 6 6"><path d="M0 .5 H6 M0 2.500 H6 M0 4.500 H6" stroke="#999" strokeDasharray="1 1" /></Svg>
    </h2>
  );
}

function CommandPanel() {
  return (
    <aside className="flex w-[204px] shrink-0 flex-col border-l-4 border-[#3b3b3b] bg-[#444] pt-0.5 pr-1 pl-[5px] text-xs">
      <div className="-ml-1 flex gap-0.5">
        {PANEL_TABS.map(([label, icon], i) => (
          <button type="button" key={label} aria-label={label} className={`flex h-[25px] w-[30px] items-center justify-center ${i ? 'bg-[#3a3a3a]' : ''}`}>
            <Svg size="h-[17px] w-[17px]">{icon}</Svg>
          </button>
        ))}
      </div>
      <div className="mt-1.5 ml-px flex gap-0.5">
        {CATEGORIES.map(([label, icon], i) => (
          <button type="button" key={label} aria-label={label} className={`flex h-[22px] w-[22px] items-center justify-center rounded-xs ${i ? '' : 'bg-[#5b87c7]'}`}>
            <Svg size="h-4 w-4">{icon}</Svg>
          </button>
        ))}
      </div>
      <span className="relative mt-2 flex">
        <select aria-label="类别" className="h-5 w-full appearance-none bg-[#666] pl-[5px] text-[11px] leading-5 text-[#ddd]"><option>标准基本体</option></select>
        <span className="pointer-events-none absolute top-2 right-2"><Caret /></span>
      </span>
      <section className="mt-1.5 mr-2 h-[167px] rounded-xs bg-[#525252]">
        <RolloutTitle>对象类型</RolloutTitle>
        <label className="ml-11 flex h-[21px] items-center gap-1 text-[11px] text-[#858585]">
          <input type="checkbox" disabled className="h-2.5 w-2.5 appearance-none bg-[#494949]" />
          自动栅格
        </label>
        <div className="grid grid-cols-2 gap-x-[5px] gap-y-1 pr-2.5 pl-[11px]">
          {PRIMITIVES.map((p) => (
            <button type="button" key={p} className="h-[17px] rounded-xs bg-[#666] text-[11px] leading-[17px] text-[#e2e2e2] shadow-[0_0_0_1px_#484848]">{p}</button>
          ))}
        </div>
      </section>
      <section className="mt-1 mr-2 h-[55px] rounded-xs bg-[#525252]">
        <RolloutTitle>名称和颜色</RolloutTitle>
        <div className="mt-2 flex items-center gap-1.5 pl-[17px]">
          <input aria-label="对象名称" disabled defaultValue="选择了 3 个 对象" className="h-5 w-32 bg-[#5a5a5a] pl-0.5 text-[#999]" />
          <button type="button" aria-label="对象颜色" className="h-5 w-[17px] border border-[#222] bg-[#22b8a4]" />
        </div>
      </section>
    </aside>
  );
}

/* ---------- Status bar and taskbar ---------- */

function StatusBar() {
  return (
    <footer className="flex h-[52px] shrink-0 bg-[#444] text-xs text-white">
      <div className="flex w-[105px] shrink-0 flex-col gap-px border-r border-black pt-[3px] pr-1">
        <input aria-label="宏录制器" readOnly className="h-[23px] w-full border-2 border-[#eee] bg-[#dcc3c3]" />
        <input aria-label="MAXScript" readOnly value="欢迎使用 MAXScr" className="h-[23px] w-full border-2 border-[#ddd] bg-white pl-[3px] font-['Liberation_Mono','Noto_Sans_CJK_SC',monospace] text-[11px] text-black" />
      </div>
      <div className="w-[920px] shrink-0 pl-1 leading-[18px]">
        <p className="mt-[7px]">选择了 3 个 对象</p>
        <p className="mt-[7px] text-[11px]">单击并拖动以选择并移动对象</p>
      </div>
      <div className="flex flex-col">
        <div className="mt-1.5 flex h-5 items-center">
          <button type="button" aria-label="孤立当前选择" className="mx-1"><Svg size="h-4 w-4"><path d="M2 7 V2 H7 M17 2 H22 V7 M22 17 V22 H17 M7 22 H2 V17" stroke={L} strokeWidth="2" /><path d="M8 7 H16 V17 H8 Z" fill={T} /></Svg></button>
          <button type="button" aria-label="锁定选择" className="mx-[7px]"><Svg size="h-4 w-4"><path d="M7 11 V7 Q7 2 12 2 Q17 2 17 7 V11" stroke={L} strokeWidth="2.500" /><path d="M4 10 H20 V23 H4 Z" fill={L} /><path d="M12 14 V19" stroke="#444" strokeWidth="2.500" /></Svg></button>
          <button type="button" aria-label="绝对模式" className="mx-1"><Svg size="h-4 w-4"><path d="M2 1 H22 V23 H2 Z" stroke={L} strokeWidth="2.500" /><circle cx="12" cy="12" r="5" stroke={L} strokeWidth="2.500" /><path d="M12 1 V7 M12 17 V23 M2 12 H7 M17 12 H22" stroke={L} strokeWidth="2" /></Svg></button>
          {['X:', 'Y:', 'Z:'].map((axis) => (
            <label key={axis} className="mr-2 flex items-center">
              <span className="w-[17px]">{axis}</span>
              <input className="h-[17px] w-[58px] bg-[#666]" />
            </label>
          ))}
          <span className="ml-2 text-[11px] whitespace-nowrap">栅格 = 1000.0mm</span>
        </div>
        <div className="mt-1 flex h-5 items-center justify-end gap-1.5 pr-5 text-[11px] text-[#ccc]">
          <button type="button" aria-label="自适应降级" className="flex h-5 w-5 items-center justify-center rounded-xs bg-[#5b87c7]"><Svg size="h-4 w-4"><path d="M12 3 L20 7.500 V16.500 L12 21 L4 16.500 V7.500 Z M4 7.500 L12 12 L20 7.500 M12 12 V21" stroke="#eee" strokeWidth="1.600" /></Svg></button>
          <button type="button">添加时间标记</button>
        </div>
      </div>
      <div className="ml-auto flex w-5 flex-col items-start gap-3 pt-[7px]">
        <Svg size="h-3 w-3"><path d="M2 2 H20 V22 H2 Z" fill={T} /></Svg>
        <Svg size="h-3 w-3"><path d="M2 2 H20 V22 H2 Z" fill={L} /></Svg>
      </div>
    </footer>
  );
}

function TaskButton({ label, running, current, children }) {
  return (
    <button type="button" aria-label={label} className={`flex h-10 w-[49px] flex-col items-center justify-between pt-[7px] ${current ? 'bg-[#626453]' : ''}`}>
      <Svg>{children}</Svg>
      <span className={`h-[3px] ${current ? 'w-full' : 'w-10'} ${running ? 'bg-[#76b9ed]' : ''}`} />
    </button>
  );
}

function Taskbar() {
  return (
    <div className="flex h-10 shrink-0 bg-linear-to-r from-[#383b26] via-[#303324] to-[#343022]">
      <button type="button" aria-label="开始" className="flex w-12 items-center justify-center bg-[#1d2826]">
        <Svg size="h-4 w-4" box="0 0 16 16"><path d="M0 2.500 L7 1.500 V7.500 H0 Z M8 1.300 L16 0 V7.500 H8 Z M0 8.500 H7 V14.500 L0 13.500 Z M8 8.500 H16 V16 L8 14.700 Z" fill="#fff" /></Svg>
      </button>
      <label className="flex w-[344px] items-center gap-3 bg-[#f2f2f2] pl-3 text-[#222]">
        <Svg size="h-4 w-4" box="0 0 16 16"><circle cx="10" cy="6" r="5" stroke="#222" strokeWidth="1.300" /><path d="M6.500 9.500 L1 15" stroke="#222" strokeWidth="1.300" /></Svg>
        <input aria-label="搜索" placeholder="在这里输入你要搜索的内容" className="flex-1 text-sm outline-none placeholder:text-[#333]" />
      </label>
      <TaskButton label="Cortana"><circle cx="12" cy="12" r="6.500" stroke="#fff" strokeWidth="2" /></TaskButton>
      <TaskButton label="任务视图"><path d="M5 8 H15 V16 H5 Z M5 5 V3 M15 5 V3 M5 5 H15 M5 21 V19 H15 V21 M19 4 V7 M19 10 V20" stroke="#fff" strokeWidth="1.400" /></TaskButton>
      <TaskButton label="Edge">
        <circle cx="12" cy="12" r="12" fill="#1277c9" />
        <path d="M0 11 Q3 1 12 0 Q23 1 24 11 Q23 17 17 17 Q13 16 14 12 Q12 5 0 11 Z" fill="#36c3c8" />
        <path d="M14 0 Q23 2 24 11 Q22 17 17 17 Q20 8 14 0 Z" fill="#5bd672" />
        <path d="M9 12 Q8 21 20 20 Q15 25 8 22 Q3 16 9 12 Z" fill="#0b4f94" />
      </TaskButton>
      <TaskButton label="文件资源管理器" running><path d="M1 2 H9 L11 5 H23 V20 H1 Z" fill="#f0b92c" /><path d="M1 7 H23 V21 H1 Z" fill="#ffdc6e" /><path d="M5 13 H19 V23 H15 V18 H9 V23 H5 Z" fill="#3b92d4" /></TaskButton>
      <TaskButton label="截图工具"><ellipse cx="10" cy="11" rx="11" ry="8" fill="#b98f8d" transform="rotate(-25 10 11)" /><ellipse cx="13" cy="8" rx="10" ry="6.500" fill="#f2f2f2" stroke="#d8463e" strokeWidth="1.500" transform="rotate(-25 13 8)" /><path d="M18 9 L14 17 M13 12 L20 18" stroke="#9ab" strokeWidth="1.500" /><circle cx="14" cy="20" r="3" stroke="#2f7fc4" strokeWidth="2" /><circle cx="20" cy="18" r="3" stroke="#2f7fc4" strokeWidth="2" /></TaskButton>
      <TaskButton label="Firefox"><path d="M12 24 Q1 23 1 13 Q1 7 5 3 L7 6 Q10 5 12 6 Q13 2 17 0 Q17 4 20 6 Q24 11 23 15 Q21 24 12 24 Z" fill="#ff5a26" /><path d="M12 6 Q14 2 17 0 Q17 4 20 6 Q24 12 22 18 Q20 10 12 8 Z" fill="#ffd53d" /><circle cx="12" cy="13.500" r="5" fill="#7542e5" /></TaskButton>
      <TaskButton label="画图" running><ellipse cx="11" cy="14" rx="10.500" ry="9.500" fill="#b4d7ec" /><circle cx="6" cy="12" r="2" fill="#d8463e" /><circle cx="11" cy="8" r="2" fill="#5aa84a" /><circle cx="7" cy="18" r="2" fill="#f0b92c" /><circle cx="12" cy="15" r="2" fill="#345" /><path d="M20 2 L13 23" stroke="#d98a3a" strokeWidth="3" /><path d="M22 0 L18 6" stroke="#e3c08a" strokeWidth="4" /></TaskButton>
      <TaskButton label="CAD看图" running><path d="M1 1 H23 V23 H1 Z" fill="#eef4fb" stroke="#4a78b8" strokeWidth="2" /><path d="M4 13 Q12 11 20 3" stroke="#3a6fc0" strokeWidth="3" /><path d="M6 20 Q17 18 20 8" stroke="#f0a020" strokeWidth="3.500" /></TaskButton>
      <TaskButton label="优酷" running><rect x="0" y="0" width="24" height="24" rx="5" fill="#fff" /><path d="M8 3 L17 9" stroke="#f2286e" strokeWidth="6" strokeLinecap="round" /><path d="M9 15 L16 10" stroke="#24a6f0" strokeWidth="5" strokeLinecap="round" /><rect x="12" y="14" width="12" height="10" rx="2" fill="#58b4e8" /><path d="M16 16 V22 M20 16 V22" stroke="#fff" strokeWidth="2" /></TaskButton>
      <TaskButton label="3ds Max" running current><path d="M0 0 H24 V24 H0 Z" fill="#dcefed" /><path d="M7 4 H14 Q18 7 13 11 H10 H13 Q19 14 15 18 Q11 20 7 18" stroke="#12807e" strokeWidth="3.500" /><path d="M14 21 H22" stroke="#2aa" strokeWidth="2" /></TaskButton>
      <span className="mr-1 ml-auto w-px bg-[#77775f]" />
    </div>
  );
}

function Watermark() {
  return (
    <div className="absolute right-[15px] bottom-0 flex h-[226px] w-[451px] items-center gap-0.5 bg-white pl-10 text-black">
      <Svg size="h-[100px] w-[120px]" box="0 0 120 100">
        <defs>
          <linearGradient id="tower" x1="0" y1="0" x2="1" y2="0"><stop offset="0" stopColor="#163a8c" /><stop offset=".5" stopColor="#4a78bd" /><stop offset="1" stopColor="#163a8c" /></linearGradient>
        </defs>
        <path d="M58 17 L82 29 V43 L70 50 V78 L58 80 Z M88 40 L108 50 L88 70 Z" fill="#dcdde0" />
        <path d="M10 56 L28 48 V76 Q15 70 10 56 Z" fill="#1c3f93" />
        <path d="M37 26 L58 15 V77 H37 Z" fill="url(#tower)" />
        <path d="M70 44 L88 36 V66 L70 74 Z" fill="#1c3f93" />
        <path d="M10 41 Q28 8 76 1 Q118 0 119 28 L114 41 Q114 10 84 8 Q40 8 10 41 Z" fill="#93c224" />
        <path d="M6 50 Q-8 80 28 94 Q80 104 120 40 Q92 78 50 84 Q6 82 6 50 Z" fill="#1c3f93" />
      </Svg>
      <p className="flex flex-col pt-4 italic">
        <span className="text-[49px] leading-10 font-black [-webkit-text-stroke:1px_black]">土木工程网</span>
        <span className="text-[33px] leading-8 font-medium">www.civilcn.com</span>
      </p>
    </div>
  );
}

export default function App() {
  return (
    <div className="relative flex h-screen min-h-[800px] flex-col overflow-hidden bg-[#444] font-['Noto_Sans','Noto_Sans_CJK_SC',sans-serif]">
      <Header />
      <Toolbar />
      <Ribbon />
      <div className="flex min-h-0 flex-1">
        <div className="flex w-10 shrink-0 flex-col items-center justify-end gap-3 border-r border-[#222] bg-[#2f2f2f] pb-0.5">
          <button type="button" aria-label="展开" className="flex h-[18px] w-[19px] items-center justify-center rounded-xs bg-[#484848]">
            <span className="border-y-4 border-l-[5px] border-y-transparent border-l-white" />
          </button>
          <button type="button" aria-label="视口布局" className="flex h-[43px] w-9 items-center justify-center rounded-sm bg-linear-to-b from-[#4c5f7d] to-[#3f7fd6]">
            <Svg size="h-[30px] w-[30px]"><path d="M1 1 H23 V23 H1 Z M12 1 V23 M1 12 H23" fill="#5b6f8d" stroke="#1f2c40" strokeWidth="1.500" /></Svg>
          </button>
        </div>
        <SceneExplorer />
        <Workspace />
        <CommandPanel />
      </div>
      <StatusBar />
      <Taskbar />
      <Watermark />
    </div>
  );
}
